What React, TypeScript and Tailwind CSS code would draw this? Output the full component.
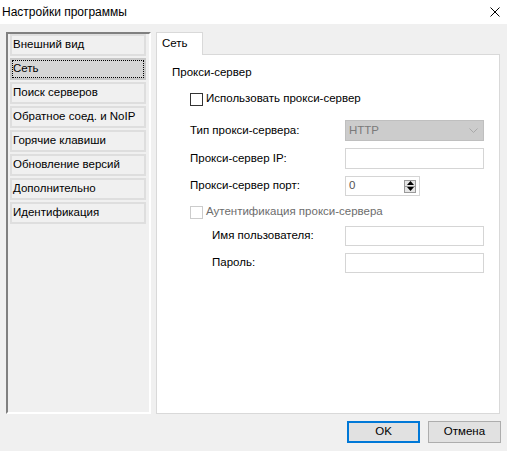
import React from 'react';

const font = { fontFamily: '"Liberation Sans", "Noto Sans", sans-serif' };

const pages = [
  'Внешний вид',
  'Сеть',
  'Поиск серверов',
  'Обратное соед. и NoIP',
  'Горячие клавиши',
  'Обновление версий',
  'Дополнительно',
  'Идентификация',
];

const Checkbox: React.FC<{ disabled?: boolean }> = ({ disabled }) => (
  <span
    className={
      'inline-block w-[13px] h-[13px] border bg-white shrink-0 ' +
      (disabled ? 'border-[#cccccc]' : 'border-[#333333]')
    }
  />
);

const SpinBox: React.FC = () => (
  <div className="w-[75px] h-[20px] border border-[#d5d5d5] bg-white flex items-center pl-[3px] text-[#555]">
    <span className="flex-1">0</span>
    <div className="flex flex-col w-[12px] h-[13px] mr-[3px] border border-[#9a9a9a] bg-[#e6e6e6]">
      <div className="flex-1 flex items-center justify-center border-b border-[#9a9a9a]">
        <svg width="7" height="4" viewBox="0 0 7 4">
          <path d="M0 4 L3.5 0 L7 4 Z" fill="#000" />
        </svg>
      </div>
      <div className="flex-1 flex items-center justify-center">
        <svg width="7" height="4" viewBox="0 0 7 4">
          <path d="M0 0 L3.5 4 L7 0 Z" fill="#000" />
        </svg>
      </div>
    </div>
  </div>
);

export default function App() {
  return (
    <div
      className="w-[507px] h-[451px] bg-[#f0f0f0] flex flex-col text-[11.5px] text-black leading-none"
      style={font}
    >
      {/* title bar */}
      <div className="h-[24px] bg-white flex items-center justify-between pl-[2px] pr-[7px]">
        <span className="text-[12px]">Настройки программы</span>
        <svg width="10" height="10" viewBox="0 0 10 10">
          <path d="M0.5 0.5 L9.5 9.5 M9.5 0.5 L0.5 9.5" stroke="#000" strokeWidth="1" />
        </svg>
      </div>

      <div className="flex gap-[5px] pl-[6px] pr-[7px] pt-[8px]">
        {/* page list */}
        <div className="w-[145px] h-[382px] border-t-2 border-l-2 border-t-[#808080] border-l-[#808080] border-r-2 border-b-2 border-r-white border-b-white flex flex-col gap-[2px] pl-[2px] pr-[3px] pt-0">
          {pages.map((p) => (
            <div
              key={p}
              className={
                'h-[22px] border-2 flex items-center ' +
                (p === 'Сеть'
                  ? 'border-[#c8c8c8] bg-[#d6d6d6]'
                  : 'border-[#dedede] bg-[#f0f0f0]')
              }
            >
              <span
                className={
                  'flex items-center h-full w-full pl-[1px] whitespace-nowrap ' +
                  (p === 'Сеть' ? 'outline outline-1 outline-dotted outline-black -outline-offset-1' : '')
                }
              >
                {p}
              </span>
            </div>
          ))}
        </div>

        {/* tab control */}
        <div className="flex flex-col flex-1">
          <div className="flex">
            <div className="w-[47px] h-[23px] -mb-px relative z-10 bg-white border border-b-0 border-[#d9d9d9] flex items-center pl-[5px]">
              Сеть
            </div>
          </div>
          <div className="h-[360px] bg-white border border-[#d9d9d9] flex flex-col">
            <div className="h-[18px] mt-[9px] pl-[15px] flex items-center">Прокси-сервер</div>

            <div className="h-[18px] mt-[8px] pl-[33px] flex items-center gap-[3px]">
              <Checkbox />
              <span>Использовать прокси-сервер</span>
            </div>

            <div className="h-[21px] mt-[12px] pl-[33px] flex items-center">
              <span className="w-[155px]">Тип прокси-сервера:</span>
              <div className="w-[139px] h-[21px] border border-[#bfbfbf] bg-[#cccccc] flex items-center justify-between pl-[3px] pr-[5px] text-[#7a7a7a]">
                <span>HTTP</span>
                <svg width="9" height="5" viewBox="0 0 9 5">
                  <path d="M0.5 0.5 L4.5 4.5 L8.5 0.5" stroke="#a8a8a8" fill="none" strokeWidth="1" />
                </svg>
              </div>
            </div>

            <div className="h-[21px] mt-[7px] pl-[33px] flex items-center">
              <span className="w-[155px]">Прокси-сервер IP:</span>
              <div className="w-[139px] h-[21px] border border-[#d5d5d5] bg-white" />
            </div>

            <div className="h-[20px] mt-[7px] pl-[33px] flex items-center">
              <span className="w-[155px]">Прокси-сервер порт:</span>
              <SpinBox />
            </div>

            <div className="h-[18px] mt-[7px] pl-[33px] flex items-center gap-[3px] text-[#6d6d6d]">
              <Checkbox disabled />
              <span>Аутентификация прокси-сервера</span>
            </div>

            <div className="h-[20px] mt-[5px] pl-[55px] flex items-center">
              <span className="w-[133px]">Имя пользователя:</span>
              <div className="w-[139px] h-[20px] border border-[#d5d5d5] bg-white" />
            </div>

            <div className="h-[20px] mt-[7px] pl-[55px] flex items-center">
              <span className="w-[133px]">Пароль:</span>
              <div className="w-[139px] h-[20px] border border-[#d5d5d5] bg-white" />
            </div>
          </div>
        </div>
      </div>

      {/* buttons */}
      <div className="flex justify-end gap-[8px] pr-[6px] mt-[7px]">
        <button className="w-[73px] h-[22px] border-2 border-[#0078d7] bg-[#e1e1e1] flex items-center justify-center">
          OK
        </button>
        <button className="w-[73px] h-[22px] border border-[#adadad] bg-[#e1e1e1] flex items-center justify-center">
          Отмена
        </button>
      </div>
    </div>
  );
}
